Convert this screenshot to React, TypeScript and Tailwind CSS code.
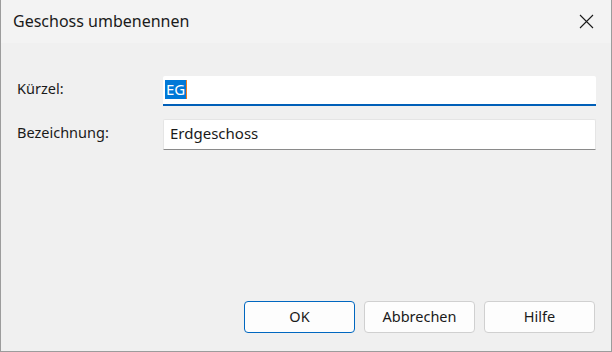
export default function App() {
  const font = { fontFamily: '"Segoe UI", "Noto Sans", "Open Sans", sans-serif' };
  return (
    <div className="w-[612px] h-[352px] bg-[#f0f0f0] border-l border-r border-b border-[#9c9c9c] flex flex-col text-[#1a1a1a]" style={font}>
      <div className="h-[43px] bg-[#f3f3f3] flex items-center justify-between pl-[12px] pr-[17px] shrink-0">
        <span className="text-[16px] leading-none pb-[1px]">Geschoss umbenennen</span>
        <svg width="15" height="15" viewBox="0 0 15 15">
          <path d="M1 1 L14 14 M14 1 L1 14" stroke="#1a1a1a" strokeWidth="1.1" fill="none" />
        </svg>
      </div>
      <div className="flex-1 flex flex-col pl-[16px] pr-[15px] pt-[33px] pb-[18px]">
        <div className="grid grid-cols-[146px_1fr] gap-y-[13px] items-center">
          <span className="text-[14.5px] pb-[4px]">Kürzel:</span>
          <div className="h-[30px] bg-white border-b-2 border-[#005fb8] flex items-center pl-[2px] pb-[2px] rounded-t-[2px]">
            <span className="bg-[#0078d7] text-white text-[15px] leading-[19px] px-[1px]">EG</span>
            <span className="w-[1px] h-[19px] bg-[#f07a1a]"></span>
          </div>
          <span className="text-[14.5px] pb-[4px]">Bezeichnung:</span>
          <div className="h-[31px] bg-white border border-[#e5e5e5] border-b-[#8a8a8a] flex items-center pl-[6px] pb-[3px] rounded-t-[2px]">
            <span className="text-[15px]">Erdgeschoss</span>
          </div>
        </div>
        <div className="mt-auto flex justify-end gap-[9px] pr-[1px]">
          <button className="w-[111px] h-[32px] rounded-[4px] bg-[#fdfdfd] border border-[#0067c0] text-[14.5px]">OK</button>
          <button className="w-[111px] h-[32px] rounded-[4px] bg-[#fdfdfd] border border-[#d0d0d0] text-[14.5px]">Abbrechen</button>
          <button className="w-[111px] h-[32px] rounded-[4px] bg-[#fdfdfd] border border-[#d0d0d0] text-[14.5px]">Hilfe</button>
        </div>
      </div>
    </div>
  );
}
